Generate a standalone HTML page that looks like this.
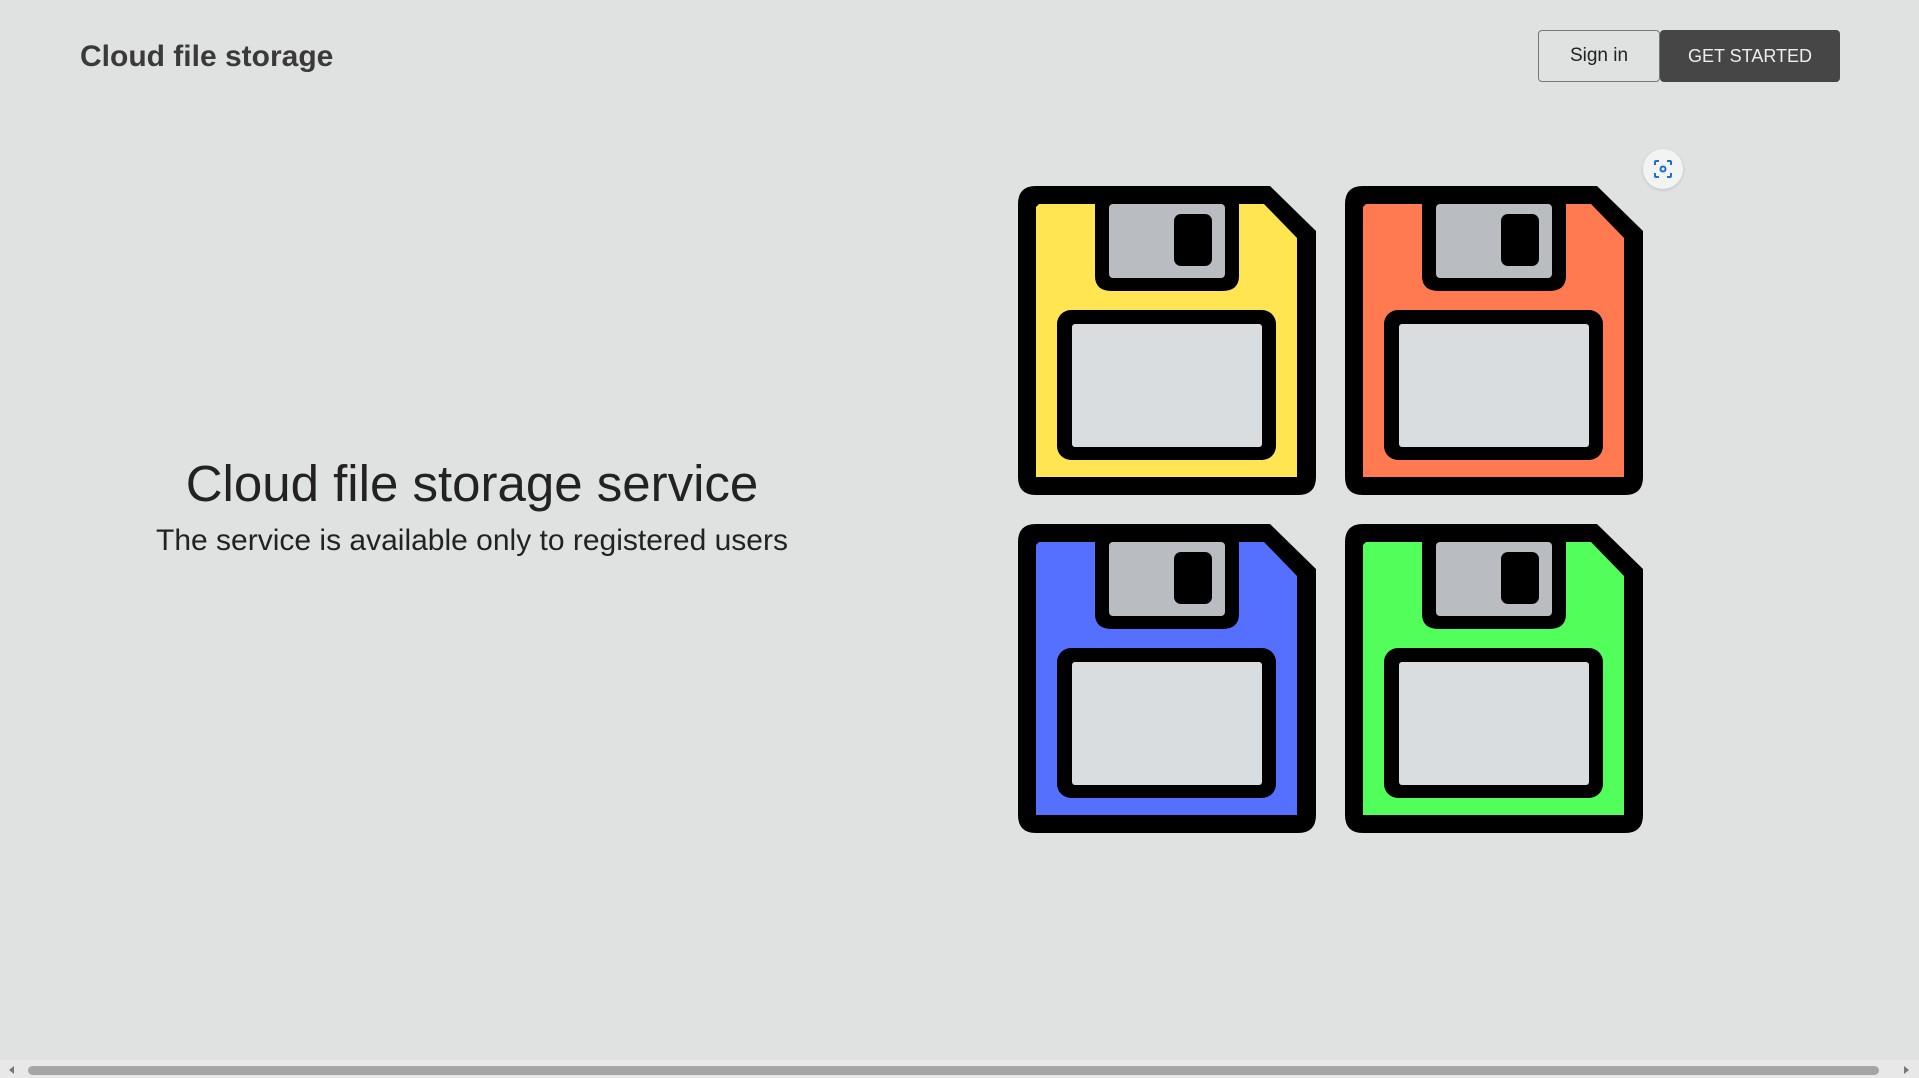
<!DOCTYPE html>
<html><head><meta charset="utf-8"><style>
html,body{margin:0;padding:0}
body{width:1919px;height:1078px;background:#e0e2e1;font-family:"Liberation Sans",sans-serif;position:relative;overflow:hidden;color:#212529}
.brand{position:absolute;left:80px;top:40px;font-size:30px;font-weight:bold;color:#3a3a3a}
.btn{position:absolute;top:30px;height:52px;box-sizing:border-box;display:flex;align-items:center;justify-content:center;font-size:19px;border-radius:4px}
.b1{left:1538px;width:122px;border:1px solid #777;color:#222}
.b2{left:1660px;width:180px;background:#464646;color:#eee;font-size:18px}
.h1{position:absolute;left:0;width:944px;text-align:center;top:454px;font-size:51px;color:#222}
.h2{position:absolute;left:0;width:944px;text-align:center;top:524px;font-size:30px;color:#222}
svg.f{position:absolute;width:298px;height:309px}
.ic{position:absolute;left:1643px;top:149px;width:40px;height:40px;border-radius:50%;background:#f2f3f3;box-shadow:0 1px 3px rgba(0,0,0,.15)}
.sb{position:absolute;left:0;top:1060px;width:1919px;height:18px;background:#e8e8e8}
.th{position:absolute;left:28px;top:1066px;width:1851px;height:9px;border-radius:5px;background:#a5a5a5}
</style></head><body>
<div class="brand">Cloud file storage</div>
<div class="btn b1">Sign in</div>
<div class="btn b2">GET STARTED</div>
<div class="h1">Cloud file storage service</div>
<div class="h2">The service is available only to registered users</div>
<svg width="0" height="0" style="position:absolute"><defs>
<g id="fl">
<path d="M18 0 H252 L298 45 V291 Q298 309 280 309 H18 Q0 309 0 291 V18 Q0 0 18 0Z" fill="#000"/>
<path d="M21 18 H246 L279 52 V291 H18 V21Z" fill="var(--c)"/>
<path d="M77 18 H221 V90 Q221 105 204 105 H94 Q77 105 77 90Z" fill="#000"/>
<rect x="91" y="18" width="116" height="74" rx="4" fill="#b9bcc0"/>
<rect x="156" y="28" width="38" height="52" rx="7" fill="#000"/>
<rect x="39" y="124" width="219" height="150" rx="14" fill="#000"/>
<rect x="54" y="138" width="190" height="123" rx="3" fill="#d9dde0"/>
</g></defs></svg>
<svg class="f" style="left:1018px;top:186px;--c:#ffe552" viewBox="0 0 298 309"><use href="#fl"/></svg>
<svg class="f" style="left:1345px;top:186px;--c:#ff7a50" viewBox="0 0 298 309"><use href="#fl"/></svg>
<svg class="f" style="left:1018px;top:524px;--c:#5570ff" viewBox="0 0 298 309"><use href="#fl"/></svg>
<svg class="f" style="left:1345px;top:524px;--c:#52ff5a" viewBox="0 0 298 309"><use href="#fl"/></svg>
<div class="ic"><svg width="40" height="40" viewBox="0 0 40 40" fill="none" stroke="#1a6fd0" stroke-width="2"><path d="M12 16V13Q12 12 13 12H16M24 12H27Q28 12 28 13V16M28 24V27Q28 28 27 28H24M16 28H13Q12 28 12 27V24"/><circle cx="20" cy="20" r="2.5"/></svg></div>
<div class="sb"></div><div class="th"></div>
<div style="position:absolute;left:9px;top:1066px;width:0;height:0;border-top:4px solid transparent;border-bottom:4px solid transparent;border-right:5px solid #777"></div>
<div style="position:absolute;left:1904px;top:1066px;width:0;height:0;border-top:4px solid transparent;border-bottom:4px solid transparent;border-left:5px solid #777"></div>
</body></html>
